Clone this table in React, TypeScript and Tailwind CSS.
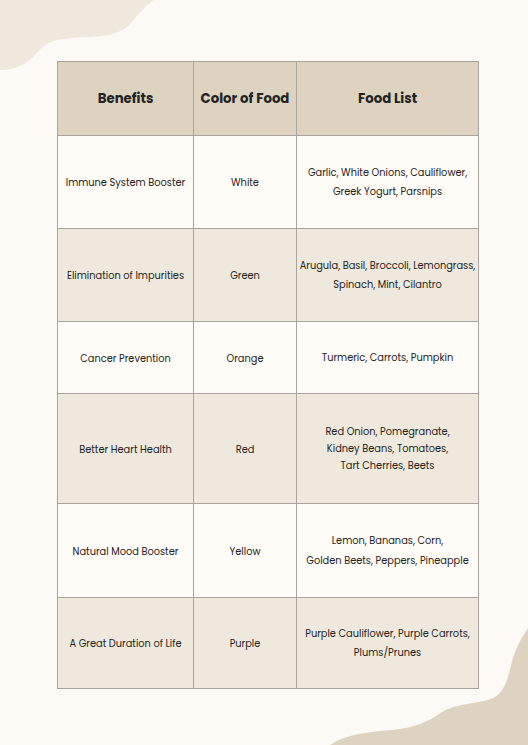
import React from 'react'

const rows = [
  { benefit: 'Immune System Booster', color: 'White', foods: ['Garlic, White Onions, Cauliflower,', 'Greek Yogurt, Parsnips'], h: 'h-[93px]', bg: 'bg-[#fffbf6]', lh: 'leading-[19px]' },
  { benefit: 'Elimination of Impurities', color: 'Green', foods: ['Arugula, Basil, Broccoli, Lemongrass,', 'Spinach, Mint, Cilantro'], h: 'h-[93px]', bg: 'bg-[#efe9dd]', lh: 'leading-[19px]' },
  { benefit: 'Cancer Prevention', color: 'Orange', foods: ['Turmeric, Carrots, Pumpkin'], h: 'h-[72px]', bg: 'bg-[#fffbf6]', lh: 'leading-[19px]' },
  { benefit: 'Better Heart Health', color: 'Red', foods: ['Red Onion, Pomegranate,', 'Kidney Beans, Tomatoes,', 'Tart Cherries, Beets'], h: 'h-[110px]', bg: 'bg-[#efe9dd]', lh: 'leading-[17px]' },
  { benefit: 'Natural Mood Booster', color: 'Yellow', foods: ['Lemon, Bananas, Corn,', 'Golden Beets, Peppers, Pineapple'], h: 'h-[94px]', bg: 'bg-[#fffbf6]', lh: 'leading-[20px]' },
  { benefit: 'A Great Duration of Life', color: 'Purple', foods: ['Purple Cauliflower, Purple Carrots,', 'Plums/Prunes'], h: 'h-[91px]', bg: 'bg-[#efe9dd]', lh: 'leading-[19px]' },
]

export default function App() {
  return (
    <div className="relative w-[528px] h-[745px] overflow-hidden bg-[#fdf9f4] text-[#222] font-['Poppins','Inter','Liberation_Sans',sans-serif]">
      {/* decorative blobs */}
      <svg className="absolute left-0 top-0" width="180" height="80" viewBox="0 0 180 80">
        <path d="M0 0 H154 C144 6 136 18 128 26 C120 33 110 36 92 37 C70 38 54 38 44 46 C34 54 30 64 14 68 C8 70 4 70 0 70 Z" fill="#efe9dd" />
      </svg>
      <svg className="absolute right-0 bottom-0" width="210" height="125" viewBox="318 620 210 125">
        <path d="M528 628 C520 640 514 652 511 666 C507 682 503 696 488 700 C472 704 456 704 442 712 C428 722 414 728 392 730 C368 732 346 734 330 745 H528 Z" fill="#ddd3c0" />
      </svg>

      <div className="relative pt-[61px] pl-[57px]">
        <table className="table-fixed border-collapse w-[421px] border-[1.5px] border-[#8c8781]">
          <colgroup>
            <col className="w-[136px]" />
            <col className="w-[103px]" />
            <col className="w-[182px]" />
          </colgroup>
          <thead>
            <tr className="h-[74px] bg-[#ddd3c0]">
              <th className="border border-[#a9a49d] text-[13.3px] font-bold text-center">Benefits</th>
              <th className="border border-[#a9a49d] text-[13.3px] font-bold text-center">Color of Food</th>
              <th className="border border-[#a9a49d] text-[13.3px] font-bold text-center">Food List</th>
            </tr>
          </thead>
          <tbody>
            {rows.map((r) => (
              <tr key={r.benefit} className={`${r.h} ${r.bg}`}>
                <td className="border border-[#a9a49d] pt-[3px] text-[9.8px] text-center whitespace-nowrap">{r.benefit}</td>
                <td className="border border-[#a9a49d] pt-[3px] text-[9.8px] text-center">{r.color}</td>
                <td className={`border border-[#a9a49d] text-[9.8px] text-center whitespace-nowrap ${r.lh}`}>
                  {r.foods.map((f) => (
                    <div key={f}>{f}</div>
                  ))}
                </td>
              </tr>
            ))}
          </tbody>
        </table>
      </div>
    </div>
  )
}
